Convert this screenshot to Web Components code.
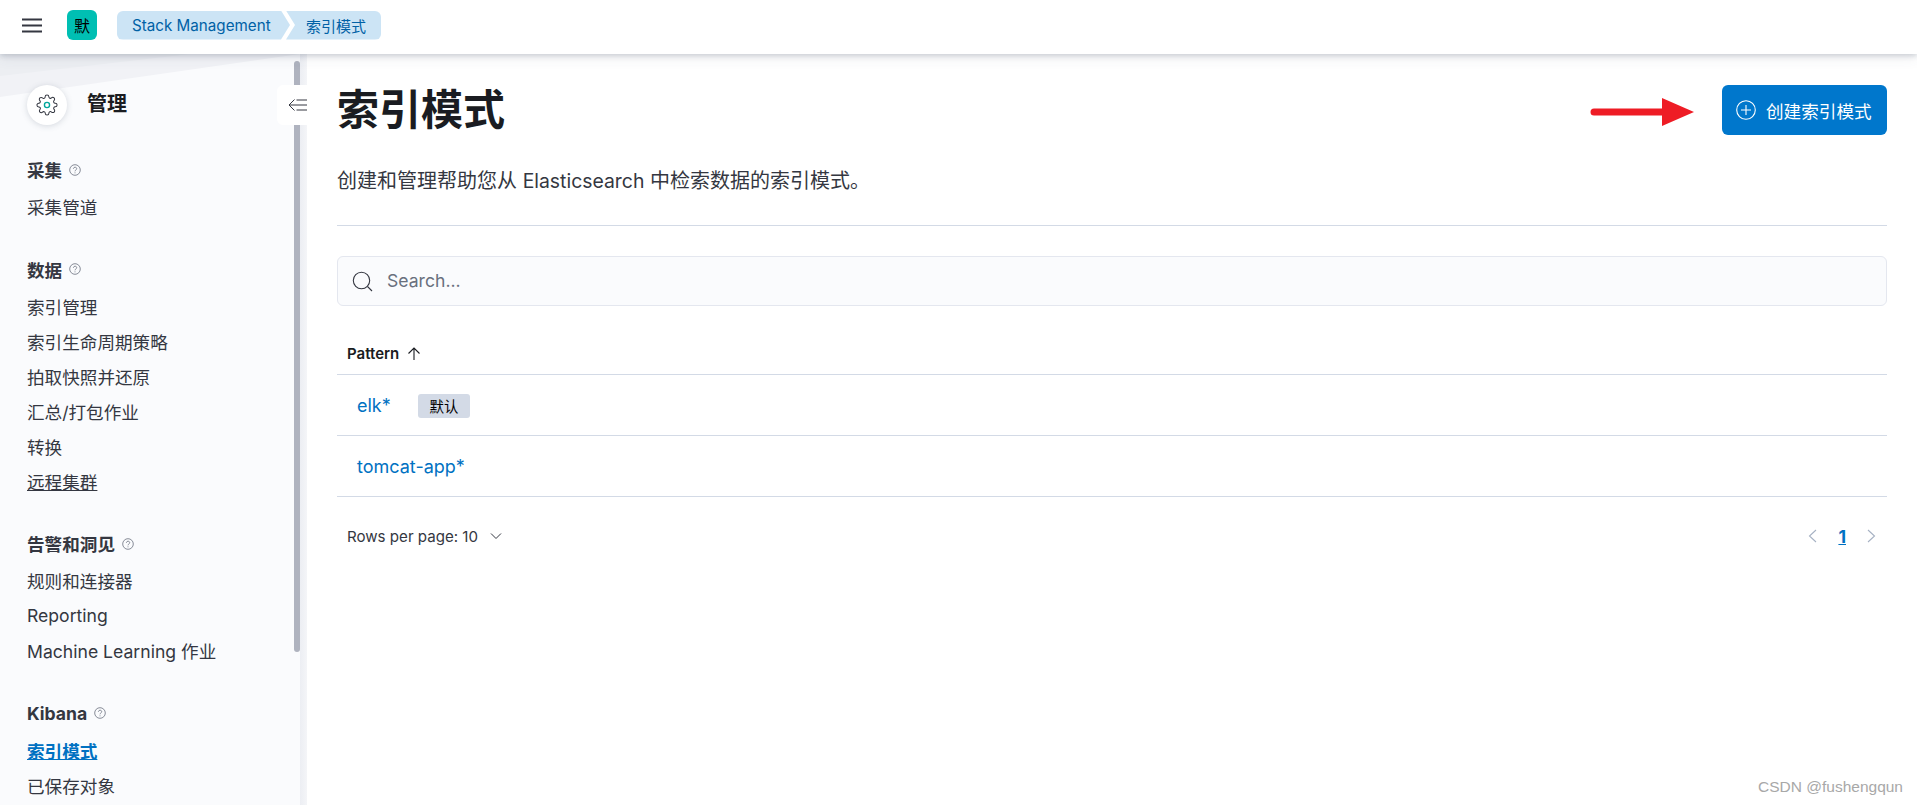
<!DOCTYPE html>
<html lang="zh-CN">
  <head>
    <meta charset="UTF-8" />
    <title>索引模式 - Stack Management</title>
    <style>
      html, body { margin: 0; height: 805px; overflow: hidden; background: #fff; }
      body {
        display: flex;
        flex-direction: column;
        font-family: Inter, "Noto Sans CJK SC", sans-serif;
        color: #343741;
      }
    </style>
  </head>
  <body>
    <app-header></app-header>
    <app-layout>
      <side-nav slot="side">
        <nav-group label="采集">
          <nav-item>采集管道</nav-item>
        </nav-group>
        <nav-group label="数据">
          <nav-item>索引管理</nav-item>
          <nav-item>索引生命周期策略</nav-item>
          <nav-item>拍取快照并还原</nav-item>
          <nav-item>汇总/打包作业</nav-item>
          <nav-item>转换</nav-item>
          <nav-item hover>远程集群</nav-item>
        </nav-group>
        <nav-group label="告警和洞见">
          <nav-item>规则和连接器</nav-item>
          <nav-item>Reporting</nav-item>
          <nav-item>Machine Learning 作业</nav-item>
        </nav-group>
        <nav-group label="Kibana">
          <nav-item active>索引模式</nav-item>
          <nav-item>已保存对象</nav-item>
        </nav-group>
      </side-nav>
      <page-head></page-head>
      <search-box></search-box>
      <pattern-table>
        <pattern-row name="elk*" badge="默认"></pattern-row>
        <pattern-row name="tomcat-app*"></pattern-row>
      </pattern-table>
      <table-pager></table-pager>
    </app-layout>
    <water-mark>CSDN @fushengqun</water-mark>

    <script>
      const CJK = 'Inter, "Noto Sans CJK SC", sans-serif';

      // Top bar
      class AppHeader extends HTMLElement {
        constructor() {
          super();
          this.attachShadow({ mode: "open" });
        }
        connectedCallback() {
          this.shadowRoot.innerHTML = `
            <style>
              :host {
                display: flex;
                align-items: center;
                flex: none;
                box-sizing: border-box;
                height: 54px;
                padding-bottom: 4px;
                background: #fff;
                box-shadow: 0 2px 5px rgba(65,78,101,.22), 0 5px 12px rgba(65,78,101,.08);
                position: relative;
                z-index: 5;
                font-family: ${CJK};
              }
              .menu { margin-left: 22px; width: 20px; height: 15px; display: block; }
              .logo {
                margin-left: 25px;
                width: 30px; height: 30px;
                border-radius: 6px;
                background: #00bfb3;
                color: #000;
                font-size: 16px;
                display: flex; align-items: center; justify-content: center;
              }
              .crumbs { margin-left: 20px; display: flex; height: 29px; font-size: 15.2px; color: #0061a6; }
              .crumb { display: flex; align-items: center; background: #cce4f5; }
              .first {
                padding: 0 17px 0 15px;
                border-radius: 6px 0 0 6px;
                width: 141px;
                clip-path: polygon(0 0, calc(100% - 9px) 0, 100% 50%, calc(100% - 9px) 100%, 0 100%);
              }
              .last {
                margin-left: -4px;
                padding: 0 15px 0 20px;
                border-radius: 0 6px 6px 0;
                clip-path: polygon(0 0, 100% 0, 100% 100%, 0 100%, 9px 50%);
                font-size: 15px;
              }
            </style>
            <svg class="menu" viewBox="0 0 20 15">
              <path d="M0 1.5h20M0 7.5h20M0 13.5h20" stroke="#343741" stroke-width="2" fill="none"/>
            </svg>
            <div class="logo">默</div>
            <div class="crumbs">
              <div class="crumb first">Stack Management</div>
              <div class="crumb last">索引模式</div>
            </div>`;
        }
      }

      // Sidebar + main column
      class AppLayout extends HTMLElement {
        constructor() {
          super();
          this.attachShadow({ mode: "open" });
        }
        connectedCallback() {
          this.shadowRoot.innerHTML = `
            <style>
              :host { display: flex; flex: 1; min-height: 0; }
              main {
                flex: 1;
                min-width: 0;
                padding: 31px 30px 0;
                background: #fff;
              }
            </style>
            <slot name="side"></slot>
            <main><slot></slot></main>`;
        }
      }

      class SideNav extends HTMLElement {
        constructor() {
          super();
          this.attachShadow({ mode: "open" });
        }
        connectedCallback() {
          this.shadowRoot.innerHTML = `
            <style>
              :host {
                display: block;
                flex: none;
                box-sizing: border-box;
                width: 307px;
                position: relative;
                background: #fafbfd;
                overflow: hidden;
                padding: 31px 0 0 27px;
              }
              .swoosh { position: absolute; left: 0; top: 0; width: 300px; height: 50px; }
              .edge {
                position: absolute; right: 0; top: 0; bottom: 0; width: 7px;
                background: linear-gradient(90deg, #eceef3, #f4f5f8);
              }
              .bar {
                position: absolute; left: 294px; top: 7px; width: 6px; height: 591px;
                border-radius: 3px; background: #afb3bf;
              }
              .collapse {
                position: absolute; left: 277px; top: 31px; width: 30px; height: 40px;
                border-radius: 6px 0 0 6px; background: #fff;
              }
              .collapse svg { position: absolute; left: 11px; top: 13px; width: 19px; height: 14px; }
              .title { display: flex; align-items: center; height: 40px; position: relative; margin-bottom: 27px; }
              .gear {
                width: 40px; height: 40px; border-radius: 50%; background: #fff;
                box-shadow: 0 1px 6px rgba(65,78,101,.2);
                display: flex; align-items: center; justify-content: center;
              }
              .gear svg { width: 22px; height: 22px; }
              h2 {
                margin: -5px 0 0 20px; font-size: 20px; font-weight: 700; color: #1a1c21;
                font-family: ${CJK};
              }
            </style>
            <svg class="swoosh" viewBox="0 0 300 50" preserveAspectRatio="none">
              <path d="M0 0H300L0 43z" fill="#f1f2f6"/>
              <path d="M0 0H190L0 22z" fill="#eceef2"/>
            </svg>
            <div class="edge"></div>
            <div class="bar"></div>
            <div class="collapse">
              <svg viewBox="0 0 19 14">
                <path d="M6.5 1.5 1 7l5.5 5.5M1 7h18M8.5 2h10.5M8.5 12h10.5" stroke="#343741" stroke-width="1" fill="none"/>
              </svg>
            </div>
            <div class="title">
              <div class="gear">
                <svg viewBox="0 0 24 24" fill="none" stroke="#343741" stroke-width="1.1">
                  <circle cx="12" cy="12" r="2.8" stroke="#00a69b" stroke-width="1.5"/>
                  <path d="M19.4 15a1.65 1.65 0 0 0 .33 1.82l.06.06a2 2 0 0 1 0 2.83 2 2 0 0 1-2.83 0l-.06-.06a1.65 1.65 0 0 0-1.82-.33 1.65 1.65 0 0 0-1 1.51V21a2 2 0 0 1-2 2 2 2 0 0 1-2-2v-.09A1.65 1.65 0 0 0 9 19.4a1.65 1.65 0 0 0-1.82.33l-.06.06a2 2 0 0 1-2.83 0 2 2 0 0 1 0-2.83l.06-.06a1.65 1.65 0 0 0 .33-1.82 1.65 1.65 0 0 0-1.51-1H3a2 2 0 0 1-2-2 2 2 0 0 1 2-2h.09A1.65 1.65 0 0 0 4.6 9a1.65 1.65 0 0 0-.33-1.82l-.06-.06a2 2 0 0 1 0-2.83 2 2 0 0 1 2.83 0l.06.06a1.65 1.65 0 0 0 1.82.33H9a1.65 1.65 0 0 0 1-1.51V3a2 2 0 0 1 2-2 2 2 0 0 1 2 2v.09a1.65 1.65 0 0 0 1 1.51 1.65 1.65 0 0 0 1.82-.33l.06-.06a2 2 0 0 1 2.83 0 2 2 0 0 1 0 2.83l-.06.06a1.65 1.65 0 0 0-.33 1.82V9a1.65 1.65 0 0 0 1.51 1H21a2 2 0 0 1 2 2 2 2 0 0 1-2 2h-.09a1.65 1.65 0 0 0-1.51 1z"/>
                </svg>
              </div>
              <h2>管理</h2>
            </div>
            <slot></slot>`;
        }
      }

      class NavGroup extends HTMLElement {
        constructor() {
          super();
          this.attachShadow({ mode: "open" });
        }
        connectedCallback() {
          this.shadowRoot.innerHTML = `
            <style>
              :host { display: block; margin-bottom: 27.5px; font-family: ${CJK}; }
              .head {
                display: flex; align-items: center; height: 35px; margin-bottom: 2px;
                font-size: 17.6px; font-weight: 700; color: #343741;
              }
              svg { width: 12px; height: 12px; margin-left: 7px; }
            </style>
            <div class="head">
              <span>${this.getAttribute("label")}</span>
              <svg viewBox="0 0 12 12" fill="none" stroke="#69707d" stroke-width=".8">
                <circle cx="6" cy="6" r="5.3"/>
                <path d="M4.4 4.8c0-2.1 3.3-2.1 3.3-.1 0 1.2-1.7 1.3-1.7 2.6M6 8.4v.9"/>
              </svg>
            </div>
            <slot></slot>`;
        }
      }

      class NavItem extends HTMLElement {
        constructor() {
          super();
          this.attachShadow({ mode: "open" });
        }
        connectedCallback() {
          this.shadowRoot.innerHTML = `
            <style>
              :host {
                display: flex; align-items: center; height: 35px;
                font-size: 17.6px; color: #343741; font-family: ${CJK};
              }
              :host([hover]) span { text-decoration: underline; }
              :host([active]) { color: #0071c2; font-weight: 700; }
              :host([active]) span { text-decoration: underline; }
            </style>
            <span><slot></slot></span>`;
        }
      }

      // Title, description and primary action
      class PageHead extends HTMLElement {
        constructor() {
          super();
          this.attachShadow({ mode: "open" });
        }
        connectedCallback() {
          this.shadowRoot.innerHTML = `
            <style>
              :host {
                display: block;
                border-bottom: 1px solid #d3dae6;
                padding-bottom: 29px;
                font-family: ${CJK};
              }
              .top { display: flex; align-items: flex-start; justify-content: space-between; height: 49px; }
              h1 { margin: 0; font-size: 42px; line-height: 49px; font-weight: 700; color: #1a1c21; }
              .right { display: flex; align-items: center; }
              .arrow { width: 104px; height: 30px; margin-right: 28px; margin-top: 4px; }
              .btn {
                display: flex; align-items: center; box-sizing: border-box;
                width: 165px; height: 50px; padding-left: 14px;
                background: #0077cc; border-radius: 6px; color: #fff; font-size: 17.6px;
              }
              .btn svg { width: 20px; height: 20px; margin-right: 10px; flex: none; }
              p { margin: 32px 0 0; font-size: 20px; line-height: 30px; color: #343741; }
              p span { font-size: 19.4px; }
            </style>
            <div class="top">
              <h1>索引模式</h1>
              <div class="right">
                <svg class="arrow" viewBox="0 0 104 30">
                  <path d="M4 11.5H72V1L104 15 72 29V18.5H4a3.5 3.5 0 0 1 0-7z" fill="#ee1c25"/>
                </svg>
                <div class="btn">
                  <svg viewBox="0 0 20 20" fill="none" stroke="#fff" stroke-width="1.1">
                    <circle cx="10" cy="10" r="9.3"/>
                    <path d="M10 5v10M5 10h10"/>
                  </svg>
                  创建索引模式
                </div>
              </div>
            </div>
            <p>创建和管理帮助您从 <span>Elasticsearch</span> 中检索数据的索引模式。</p>`;
        }
      }

      class SearchBox extends HTMLElement {
        constructor() {
          super();
          this.attachShadow({ mode: "open" });
        }
        connectedCallback() {
          this.shadowRoot.innerHTML = `
            <style>
              :host {
                display: flex; align-items: center; box-sizing: border-box;
                height: 50px; margin-top: 30px; padding-left: 14px;
                background: #fafbfd; border: 1px solid #e4e7ef; border-radius: 6px;
                font-family: ${CJK}; font-size: 17.6px; color: #69707d;
              }
              svg { width: 21px; height: 21px; margin-right: 14px; }
              span { margin-top: -2px; }
            </style>
            <svg viewBox="0 0 21 21" fill="none" stroke="#343741" stroke-width="1.1">
              <circle cx="9.5" cy="9.5" r="8.2"/>
              <path d="M15.5 15.5l4.5 4.5"/>
            </svg>
            <span>Search...</span>`;
        }
      }

      class PatternTable extends HTMLElement {
        constructor() {
          super();
          this.attachShadow({ mode: "open" });
        }
        connectedCallback() {
          this.shadowRoot.innerHTML = `
            <style>
              :host { display: block; margin-top: 27px; font-family: ${CJK}; }
              .head {
                display: flex; align-items: center; box-sizing: border-box;
                height: 42px; padding: 0 10px; border-bottom: 1px solid #d3dae6;
                font-size: 15px; font-weight: 600; color: #1a1c21;
              }
              svg { width: 14px; height: 14px; margin-left: 8px; }
            </style>
            <div class="head">
              Pattern
              <svg viewBox="0 0 14 14" fill="none" stroke="#1a1c21" stroke-width="1.1">
                <path d="M7 13V1M1.5 6.5 7 1l5.5 5.5"/>
              </svg>
            </div>
            <slot></slot>`;
        }
      }

      class PatternRow extends HTMLElement {
        constructor() {
          super();
          this.attachShadow({ mode: "open" });
        }
        connectedCallback() {
          const badge = this.getAttribute("badge");
          this.shadowRoot.innerHTML = `
            <style>
              :host {
                display: flex; align-items: center; box-sizing: border-box;
                height: 61px; padding-left: 20px; border-bottom: 1px solid #d3dae6;
                font-family: ${CJK}; font-size: 18px; color: #0071c2;
              }
              .name { width: 33px; white-space: nowrap; }
              :host(:not([badge])) .name { width: auto; }
              .badge {
                display: flex; align-items: center; justify-content: center;
                width: 52px; height: 24px; margin-left: 28px; margin-top: 1px;
                background: #d3dae6; border-radius: 3px; color: #000; font-size: 14.4px;
              }
            </style>
            <span class="name">${this.getAttribute("name")}</span>
            ${badge ? `<span class="badge">${badge}</span>` : ""}`;
        }
      }

      class TablePager extends HTMLElement {
        constructor() {
          super();
          this.attachShadow({ mode: "open" });
        }
        connectedCallback() {
          this.shadowRoot.innerHTML = `
            <style>
              :host {
                display: flex; align-items: center; justify-content: space-between;
                height: 30px; margin-top: 24px; padding: 0 10px;
                font-family: ${CJK}; font-size: 15.1px; color: #343741;
              }
              .size, .pages { display: flex; align-items: center; }
              .size svg { width: 12px; height: 8px; margin-left: 12px; }
              .pages svg { width: 9px; height: 14px; }
              .num {
                margin: 0 21px 0 21px; font-size: 17.6px; font-weight: 700;
                color: #0071c2; text-decoration: underline;
              }
              .pages { margin-right: 1px; }
            </style>
            <div class="size">
              Rows per page: 10
              <svg viewBox="0 0 12 8" fill="none" stroke="#343741"><path d="M1 1.5 6 6.5l5-5"/></svg>
            </div>
            <div class="pages">
              <svg viewBox="0 0 9 14" fill="none" stroke="#a6b1c3" stroke-width="1.1"><path d="M8 1 1.5 7 8 13"/></svg>
              <span class="num">1</span>
              <svg viewBox="0 0 9 14" fill="none" stroke="#a6b1c3" stroke-width="1.1"><path d="M1 1l6.5 6L1 13"/></svg>
            </div>`;
        }
      }

      class WaterMark extends HTMLElement {
        constructor() {
          super();
          this.attachShadow({ mode: "open" });
        }
        connectedCallback() {
          this.shadowRoot.innerHTML = `
            <style>
              :host {
                position: absolute; right: 14px; top: 778px;
                font: 15.5px/18px "Liberation Sans", sans-serif; color: #a8a8a8;
                z-index: 6;
              }
            </style>
            <slot></slot>`;
        }
      }

      customElements.define("app-header", AppHeader);
      customElements.define("app-layout", AppLayout);
      customElements.define("side-nav", SideNav);
      customElements.define("nav-group", NavGroup);
      customElements.define("nav-item", NavItem);
      customElements.define("page-head", PageHead);
      customElements.define("search-box", SearchBox);
      customElements.define("pattern-table", PatternTable);
      customElements.define("pattern-row", PatternRow);
      customElements.define("table-pager", TablePager);
      customElements.define("water-mark", WaterMark);
    </script>
  </body>
</html>
